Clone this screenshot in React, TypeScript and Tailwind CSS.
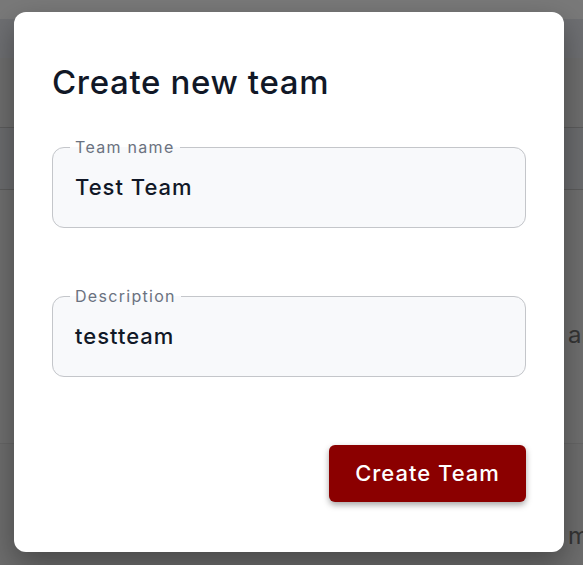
import React from "react";

const font = { fontFamily: "Inter, 'Noto Sans', sans-serif" };

function Field({ label, value }: { label: string; value: string }) {
  return (
    <fieldset className="rounded-[12px] border border-[#c4c6ca] bg-[#f8f9fb] pl-[22px] pr-[22px] pb-[26px]">
      <legend className="-ml-[5px] px-[5px] text-[16px] leading-[20px] tracking-[1.3px] text-[#6b7280]">{label}</legend>
      <div className="mt-[16px] text-[22px] leading-[28px] font-medium tracking-[1px] text-[#111827]">{value}</div>
    </fieldset>
  );
}

export default function App() {
  return (
    <div className="relative h-[565px] w-[583px] overflow-hidden bg-[#6c6c6c]" style={font}>
      {/* underlying page, dimmed */}
      <div className="flex flex-col">
        <div className="h-[19px] bg-[#797979]" />
        <div className="h-[39px] bg-[#6e6f72]" />
        <div className="h-[70px] border-b border-[#5c5c5c] bg-[#6e6e6e]" />
        <div className="h-[62px] border-b border-[#5c5c5c] bg-[#6b6c6e]" />
        <div className="h-[254px] border-b border-[#666] bg-[#6f6f6f] pl-[568px] pt-[129px] leading-[32px] whitespace-nowrap text-[24px] text-[#353535]">
          and
        </div>
        <div className="h-[120px] bg-[#6d6d6d] pl-[568px] pt-[76px] leading-[32px] whitespace-nowrap text-[24px] text-[#353535]">
          m
        </div>
      </div>

      {/* dialog */}
      <div className="absolute left-[14px] top-[12px] flex h-[540px] w-[550px] flex-col rounded-[12px] bg-white px-[38px] pt-[50px] pb-[50px] shadow-[0_12px_30px_rgba(0,0,0,0.35)]">
        <h1 className="text-[33px] leading-[40px] font-medium tracking-[0.65px] text-[#111827]">Create new team</h1>
        <div className="mt-[35px]">
          <Field label="Team name" value="Test Team" />
        </div>
        <div className="mt-[58px]">
          <Field label="Description" value="testteam" />
        </div>
        <div className="mt-auto flex justify-end">
          <button className="flex h-[57px] w-[197px] items-center justify-center rounded-[6px] bg-[#8b0000] text-[22px] font-medium tracking-[1px] text-white shadow-[0_3px_6px_rgba(0,0,0,0.35)]">
            Create Team
          </button>
        </div>
      </div>
    </div>
  );
}
